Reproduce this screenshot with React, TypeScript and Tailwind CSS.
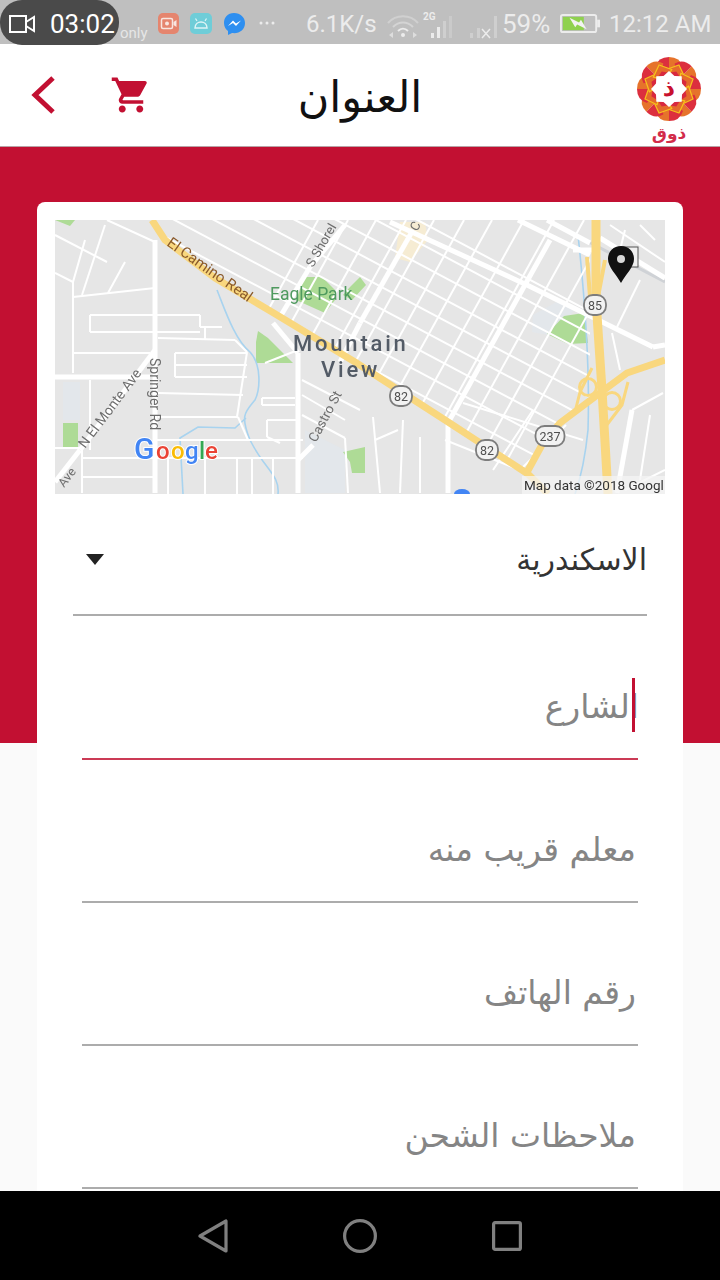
const seStreets: number[][] = [];
[158, 180, 201, 223, 244, 266, 287, 309, 331, 352, 374, 396, 417, 438].forEach((y) => {
  seStreets.push([150, y - 80, 600, y + 159]);
});
const neStreets: number[][] = [];
[246, 276, 304, 334, 362, 392, 420, 452, 482, 512, 540, 568].forEach((x) => {
  neStreets.push([x + 72, 220, x - 72, 480]);
});
const minor: number[][] = [
  [107, 220, 155, 242], [55, 235, 107, 262], [55, 273, 73, 282], [73, 282, 73, 373], [73, 297, 155, 288], [85, 240, 73, 282], [105, 225, 82, 295], [125, 262, 108, 293],
  [90, 315, 200, 315], [90, 332, 200, 332], [90, 315, 90, 332], [73, 353, 150, 353], [158, 338, 235, 340], [235, 340, 247, 352], [247, 352, 237, 417],
  [175, 353, 247, 353], [175, 365, 247, 365], [175, 377, 247, 377], [175, 353, 175, 377], [158, 393, 243, 395], [158, 417, 238, 417], [238, 417, 248, 440],
  [157, 440, 303, 440], [83, 458, 303, 458], [83, 477, 153, 477], [82, 450, 82, 493], [90, 380, 90, 450], [55, 448, 82, 448], [200, 315, 200, 327], [200, 327, 222, 327], [205, 327, 205, 340],
  [168, 458, 168, 494], [205, 458, 205, 494], [237, 458, 237, 494], [252, 458, 252, 494], [273, 458, 273, 494], [262, 398, 295, 398], [262, 405, 295, 405], [262, 398, 262, 405],
  [267, 420, 297, 420], [267, 420, 267, 437], [267, 437, 280, 443], [302, 380, 360, 410], [302, 395, 345, 420], [302, 415, 345, 438], [265, 363, 298, 350],
  [463, 403, 583, 440], [403, 420, 400, 493], [373, 417, 380, 493], [533, 410, 493, 470], [420, 437, 420, 493], [345, 438, 348, 493], [375, 440, 398, 430], [445, 440, 520, 470],
  [632, 410, 663, 393], [640, 280, 617, 327], [612, 333, 620, 370], [650, 415, 640, 480], [625, 490, 665, 470], [566, 425, 520, 470], [625, 230, 620, 250], [640, 225, 655, 240], [610, 225, 665, 262],
];
const major: number[][] = [
  [155, 240, 155, 350], [155, 350, 80, 450], [80, 450, 55, 482], [155, 350, 155, 493], [55, 377, 150, 377], [273, 323, 298, 353], [298, 353, 298, 493], [298, 460, 313, 445],
  [280, 317, 310, 267], [310, 267, 345, 225], [413, 230, 360, 323], [360, 323, 340, 362], [550, 240, 448, 423], [448, 423, 448, 493], [390, 222, 527, 285], [527, 285, 653, 347], [653, 347, 665, 345],
  [547, 220, 590, 243], [573, 250, 592, 250], [518, 220, 590, 255], [600, 238, 665, 278], [632, 410, 617, 493],
];
const parks: string[] = [
  "M305 277 L322 277 L335 290 L335 300 L325 313 L296 300 Z",
  "M350 287 L360 277 L366 285 L352 300 L343 295 Z",
  "M258 331 L268 338 L293 363 L256 363 L256 342 Z",
  "M63 423 L78 423 L78 448 L63 448 Z",
  "M343 452 L365 447 L365 473 L352 473 L350 462 Z",
  "M547 334 L564 316 L584 313 L588 343 L568 344 Z",
  "M55 220 L75 220 L70 226 Z",
];
const greys: string[] = [
  "M533 315 L560 300 L575 310 L548 335 L532 332 Z",
  "M305 430 L345 450 L345 493 L305 493 Z",
  "M63 382 L80 382 L80 420 L63 420 Z",
];

function Shield({ x, y, label, w = 22 }: { x: number; y: number; label: string; w?: number }) {
  return (
    <g>
      <rect x={x - w / 2} y={y - 10} width={w} height={20} rx={9} fill="#f2f2f2" stroke="#7d7d7d" strokeWidth="1.8" />
      <text x={x} y={y + 4.5} textAnchor="middle" fontSize="12.5" fill="#4f4f4f" fontFamily="Roboto, sans-serif">{label}</text>
    </g>
  );
}

function MapPicture() {
  return (
    <svg viewBox="55 220 610 274" className="block h-[274px] w-[610px] blur-[0.5px]">
      <defs>
        <clipPath id="north">
          <path d="M165 220 L590 220 L590 400 L555 430 L525 470 L355 360 L272 310 L165 240 Z" />
        </clipPath>
      </defs>
      <rect x="55" y="220" width="610" height="274" fill="#e6e6e6" />
      {greys.map((d, i) => <path key={i} d={d} fill="#e3e7eb" />)}
      {parks.map((d, i) => <path key={i} d={d} fill="#aedb96" />)}
      <path d="M400 222 L425 222 L428 240 L410 262 L395 258 Z" fill="#f6ecd3" />
      <path d="M217 290 C225 310 235 340 250 352 C262 365 260 390 255 400 C245 412 240 415 250 440 C265 470 280 475 278 494" fill="none" stroke="#a8d3ef" strokeWidth="1.6" />
      <path d="M183 494 L180 438 L198 427 L235 428 L246 418" fill="none" stroke="#a8d3ef" strokeWidth="1.6" />
      <path d="M578 235 C585 300 590 370 588 430 C585 460 580 480 575 494" fill="none" stroke="#a8d3ef" strokeWidth="1.6" />
      <path d="M547 220 L665 282" fill="none" stroke="#cfd2d6" strokeWidth="3" />
      <g clipPath="url(#north)">
        {seStreets.map((l, i) => <line key={i} x1={l[0]} y1={l[1]} x2={l[2]} y2={l[3]} stroke="#ffffff" strokeWidth="2" />)}
        {neStreets.map((l, i) => <line key={i} x1={l[0]} y1={l[1]} x2={l[2]} y2={l[3]} stroke="#ffffff" strokeWidth="2" />)}
      </g>
      {minor.map((l, i) => <line key={i} x1={l[0]} y1={l[1]} x2={l[2]} y2={l[3]} stroke="#ffffff" strokeWidth="2" />)}
      {major.map((l, i) => <line key={i} x1={l[0]} y1={l[1]} x2={l[2]} y2={l[3]} stroke="#ffffff" strokeWidth="5" />)}
      <g fill="none" stroke="#f9d77e" strokeLinejoin="round">
        <path d="M152 220 L165 240 L215 278 L272 312 L355 362 L445 420 L528 474 L548 494" strokeWidth="7" />
        <path d="M596 220 L596 300 L602 390 L608 494" strokeWidth="9" />
        <path d="M587 257 L590 297 M605 260 L598 297" strokeWidth="4" />
        <path d="M526 474 L543 443 L560 423 L600 393 L627 373 L665 360" strokeWidth="7" />
        <circle cx="588" cy="387" r="8.5" strokeWidth="3" />
        <circle cx="612" cy="401" r="8.5" strokeWidth="3" />
        <path d="M575 412 L580 392 L592 368 M606 426 L622 405 L628 382" strokeWidth="3" />
      </g>
      <g fontFamily="Roboto, sans-serif">
        <text transform="translate(166 245) rotate(35)" fontSize="15" fill="#8a5a2b">El Camino Real</text>
        <text x="270" y="300" fontSize="17.5" fill="#4f9a5f">Eagle Park</text>
        <text x="293" y="351" fontSize="22" fontWeight="500" letterSpacing="2.8" fill="#535b66">Mountain</text>
        <text x="321" y="377" fontSize="22" fontWeight="500" letterSpacing="2.8" fill="#535b66">View</text>
        <text transform="translate(313 268) rotate(-60)" fontSize="13" fill="#6d6d6d">S Shorel</text>
        <text transform="translate(150 358) rotate(90)" fontSize="14" fill="#6d6d6d">Springer Rd</text>
        <text transform="translate(85 449) rotate(-53)" fontSize="14" fill="#6d6d6d">N El Monte Ave</text>
        <text transform="translate(64 488) rotate(-52)" fontSize="12.5" fill="#6d6d6d">Ave</text>
        <text transform="translate(316 443) rotate(-62)" fontSize="13.5" fill="#6d6d6d">Castro St</text>
        <text transform="translate(417 232) rotate(-60)" fontSize="13" fill="#6d6d6d">C</text>
      </g>
      <Shield x={595} y={305} label="85" />
      <Shield x={401} y={396} label="82" />
      <Shield x={487} y={450} label="82" />
      <Shield x={550} y={436} label="237" w={29} />
      <g fontFamily="Roboto, sans-serif" fontWeight="500" stroke="#ffffff" strokeWidth="2" paintOrder="stroke">
        <text x="134" y="459" fontSize="30" fill="#4285f4">G</text>
        <text x="156" y="459" fontSize="24" fill="#ea4335">o</text>
        <text x="171" y="459" fontSize="24" fill="#fbbc05">o</text>
        <text x="185" y="459" fontSize="24" fill="#4285f4">g</text>
        <text x="199" y="459" fontSize="24" fill="#34a853">l</text>
        <text x="205" y="459" fontSize="24" fill="#ea4335">e</text>
      </g>
      <rect x="522" y="476" width="143" height="18" fill="#f4f4f4" fillOpacity="0.75" />
      <text x="524" y="490" fontFamily="Roboto, sans-serif" fontSize="13.5" fill="#333333">Map data ©2018 Googl</text>
      <path d="M454 494 A8 5 0 0 1 470 494 Z" fill="#4285f4" />
      <rect x="621" y="247" width="17" height="20" fill="#f0f0f0" stroke="#555555" strokeWidth="1" />
      <path d="M621 246 C613 246 608 252 608 259 C608 267 616 274 621 283 C626 274 634 267 634 259 C634 252 629 246 621 246 Z" fill="#111111" />
      <circle cx="621" cy="259" r="4" fill="#d8d8d8" />
    </svg>
  );
}

function Logo() {
  const petals = [0, 45, 90, 135, 180, 225, 270, 315];
  return (
    <div className="flex w-[64px] flex-col items-center pt-[11px]">
      <svg viewBox="-32 -32 64 64" className="h-[64px] w-[64px]">
        {petals.map((a) => (
          <g key={a} transform={`rotate(${a})`}>
            <path d="M0 -32 Q11 -32 14 -22 L0 -12 Z" fill="#e6732b" />
            <path d="M0 -32 Q-11 -32 -14 -22 L0 -12 Z" fill="#dc2f3e" />
          </g>
        ))}
        {petals.map((a) => (
          <g key={a} transform={`rotate(${a + 22.5})`}>
            <path d="M0 -26 L10 -17 L0 -10 L-10 -17 Z" fill="#e56a2b" stroke="#f6c21c" strokeWidth="1.2" />
            <path d="M0 -19 L6 -15 L0 -10 L-6 -15 Z" fill="#d8283f" />
          </g>
        ))}
        <path d="M0 -18 L5.5 -13 L12.7 -12.7 L13 -5.5 L18 0 L13 5.5 L12.7 12.7 L5.5 13 L0 18 L-5.5 13 L-12.7 12.7 L-13 5.5 L-18 0 L-13 -5.5 L-12.7 -12.7 L-5.5 -13 Z" fill="#ffffff" />
        <text x="0" y="7" textAnchor="middle" fontSize="24" fontWeight="700" fill="#c8102e" fontFamily="'DejaVu Sans', sans-serif">ذ</text>
      </svg>
      <span className="mt-[1px] text-[17px] leading-[22px] font-bold text-[#d22c4a] [font-family:'DejaVu_Sans',sans-serif]" dir="rtl">ذوق</span>
    </div>
  );
}

function Field({ label, active }: { label: string; active?: boolean }) {
  return (
    <div className={`relative flex h-[143px] items-end justify-end border-b-2 pb-[30px] text-[33px] leading-[42px] text-[#858585] ${active ? "border-[#cb3a55] pr-0" : "border-[#acacac] pr-[2px]"}`}>
      <span dir="rtl" className={active ? "-mr-[1px]" : ""}>{label}</span>
      {active && <span className="absolute right-[3px] bottom-[26px] h-[54px] w-[3px] bg-[#c21032]" />}
    </div>
  );
}

export default function App() {
  return (
    <div className="flex h-[1280px] w-[720px] flex-col overflow-hidden bg-white [font-family:'DejaVu_Sans',sans-serif]">
      <div className="relative flex h-[44px] shrink-0 items-center bg-[#bfbfbf] pt-[3px] pl-[157px] text-[24px] leading-[30px] text-[#ececec] [font-family:Roboto,sans-serif]">
        <div className="absolute top-[25px] left-[120px] text-[15px] leading-[17px] text-[#e6e6e6]">only</div>
        <div className="absolute top-0 left-0 z-10 flex h-[45px] w-[119px] items-center gap-[15px] rounded-[22px] bg-[#4a4a4a] pt-[2px] pl-[9px] text-[26px] text-white">
          <svg viewBox="0 0 26 18" className="h-[18px] w-[26px]" fill="none" stroke="#ffffff" strokeWidth="2"><rect x="1" y="1" width="16" height="16" /><path d="M17 7 L25 2 V16 L17 11" /></svg>
          <span>03:02</span>
        </div>
        <svg viewBox="0 0 120 24" className="h-[24px] w-[120px] blur-[0.3px]">
          <rect x="1" y="1" width="21" height="21" rx="5" fill="#e5856e" />
          <rect x="4.5" y="6.5" width="11" height="10" rx="1.5" fill="none" stroke="#f8e6e0" strokeWidth="1.5" />
          <circle cx="10" cy="11.5" r="2" fill="#f8e6e0" />
          <path d="M16.5 10 L19.5 8 V15 L16.5 13 Z" fill="#f8e6e0" />
          <rect x="33" y="1" width="22" height="21" rx="5" fill="#6fcdd8" />
          <path d="M38 16 C38 8 50 8 50 16 Z" fill="none" stroke="#dff4f6" strokeWidth="1.5" />
          <path d="M40 9 L38.5 6.5 M48 9 L49.5 6.5" stroke="#dff4f6" strokeWidth="1.2" />
          <path d="M77 1 C70.5 1 67 5.5 67 11 C67 15 69 17.5 71 19 V23 L75 21 C82 22 88 18 88 11 C88 5.5 83.5 1 77 1 Z" fill="#2e8ff0" />
          <path d="M71 14 L76 8.5 L79 11.5 L84 8.5 L79 14 L76 11 Z" fill="#ffffff" />
          <circle cx="104" cy="11" r="1.5" fill="#ececec" />
          <circle cx="110" cy="11" r="1.5" fill="#ececec" />
          <circle cx="116" cy="11" r="1.5" fill="#ececec" />
        </svg>
        <span className="ml-[29px] w-[70px]">6.1K/s</span>
        <svg viewBox="0 0 112 30" className="ml-[9px] h-[30px] w-[112px]" fill="none">
          <path d="M3 14 C11 5 25 5 33 14" stroke="#d0d0d0" strokeWidth="2" />
          <path d="M8 18 C14 12 22 12 28 18" stroke="#d4d4d4" strokeWidth="2" />
          <path d="M13 22 C16 19 20 19 23 22" stroke="#ececec" strokeWidth="2" />
          <circle cx="18" cy="26" r="2" fill="#ececec" />
          <path d="M8 23 L4 26 L8 29 Z M28 23 L32 26 L28 29 Z" fill="#dddddd" />
          <text x="38" y="11" fontSize="10" fontWeight="700" fill="#ececec" fontFamily="Roboto, sans-serif">2G</text>
          <rect x="46" y="24" width="3" height="5" fill="#ececec" />
          <rect x="52" y="18" width="3" height="11" fill="#ececec" />
          <rect x="58" y="12" width="3" height="17" fill="#cfcfcf" />
          <rect x="64" y="7" width="3" height="22" fill="#cacaca" />
          <rect x="85" y="24" width="3" height="5" fill="#cfcfcf" />
          <rect x="92" y="19" width="3" height="10" fill="#cfcfcf" />
          <path d="M97 20 L105 29 M105 20 L97 29" stroke="#ececec" strokeWidth="1.5" />
          <rect x="109" y="7" width="3" height="22" fill="#cfcfcf" />
        </svg>
        <span className="ml-[5px] w-[49px] text-[26px]">59%</span>
        <svg viewBox="0 0 42 22" className="ml-[9px] h-[21px] w-[40px]">
          <rect x="1" y="2" width="37" height="18" rx="2" fill="none" stroke="#ececec" strokeWidth="2" />
          <rect x="3" y="4" width="22" height="14" fill="#8fd14f" />
          <rect x="39" y="7" width="3" height="8" fill="#ececec" />
          <path d="M10 5 L20 10 L22 7 L28 17 L18 12 L16 15 Z" fill="#f2f2f2" />
        </svg>
        <span className="ml-[9px]">12:12 AM</span>
      </div>

      <header className="flex h-[103px] shrink-0 items-center border-b border-[#b9a2a6] bg-white pr-[19px] pl-[30px]">
        <svg viewBox="0 0 26 38" className="h-[38px] w-[26px]" fill="none" stroke="#c21032" strokeWidth="5"><path d="M23 2 L5 19 L23 36" /></svg>
        <svg viewBox="0 0 24 24" className="ml-[54px] h-[42px] w-[42px]" fill="#c21032"><path d="M7 18c-1.1 0-1.99.9-1.99 2S5.9 22 7 22s2-.9 2-2-.9-2-2-2zM1 2v2h2l3.6 7.59-1.35 2.45c-.16.28-.25.61-.25.96 0 1.1.9 2 2 2h12v-2H7.42c-.14 0-.25-.11-.25-.25l.03-.12.9-1.63h7.45c.75 0 1.41-.41 1.75-1.03l3.58-6.49c.08-.14.12-.31.12-.48 0-.55-.45-1-1-1H5.21l-.94-2H1zm16 16c-1.1 0-1.99.9-1.99 2s.89 2 1.99 2 2-.9 2-2-.9-2-2-2z" /></svg>
        <div className="flex-1 pt-[3px] pr-[69px] text-center text-[43px] leading-[54px] text-[#111111]" dir="rtl">العنوان</div>
        <Logo />
      </header>

      <main className="min-h-0 flex-1 overflow-hidden bg-[linear-gradient(#c21032_596px,#fafafa_596px)] px-[37px] pt-[55px]">
        <div className="rounded-lg bg-white p-[18px]">
          <MapPicture />
          <div className="mx-[18px] flex h-[122px] items-center justify-between border-b-2 border-[#acacac] pt-[11px] pl-[13px]">
            <svg viewBox="0 0 18 11" className="h-[11px] w-[18px]" fill="#222222"><path d="M0 0 H18 L9 11 Z" /></svg>
            <span dir="rtl" className="text-[30px] leading-[36px] text-[#333333]">الاسكندرية</span>
          </div>
          <div className="mx-[27px] mt-[1px]">
            <Field label="الشارع" active />
            <Field label="معلم قريب منه" />
            <Field label="رقم الهاتف" />
            <Field label="ملاحظات الشحن" />
          </div>
        </div>
      </main>

      <nav className="flex h-[89px] shrink-0 items-center justify-center gap-[115px] bg-black">
        <svg viewBox="0 0 30 34" className="h-[34px] w-[30px]" fill="none" stroke="#808080" strokeWidth="3.2" strokeLinejoin="round"><path d="M28 2 V32 L2 17 Z" /></svg>
        <svg viewBox="0 0 34 34" className="h-[34px] w-[34px]" fill="none" stroke="#808080" strokeWidth="3.2"><circle cx="17" cy="17" r="15.4" /></svg>
        <svg viewBox="0 0 30 30" className="h-[30px] w-[30px]" fill="none" stroke="#808080" strokeWidth="3.2" strokeLinejoin="round"><rect x="1.6" y="1.6" width="26.8" height="26.8" rx="1.5" /></svg>
      </nav>
    </div>
  );
}
